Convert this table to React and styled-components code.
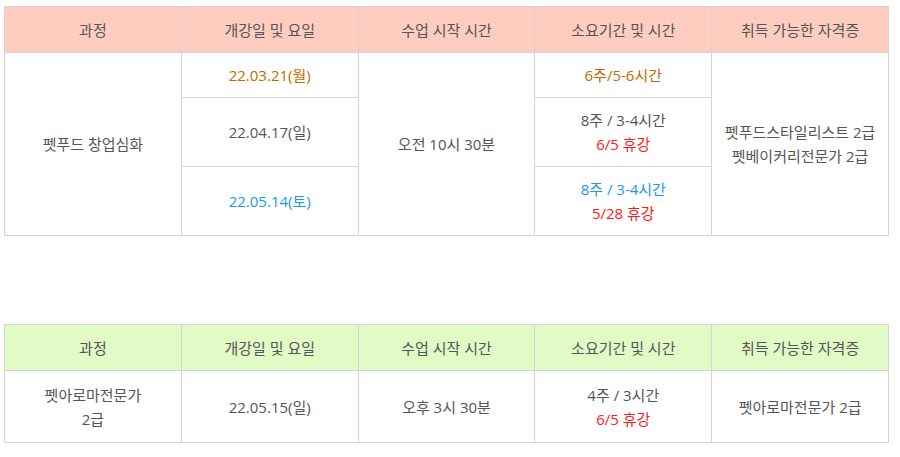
import React from "react";
import styled, { createGlobalStyle } from "styled-components";

const Global = createGlobalStyle`
  body {
    margin: 0;
    background: #fff;
    font-family: "Open Sans", "Noto Sans CJK KR", sans-serif;
  }
`;

const Page = styled.div`
  padding: 6px 11px 0 4px;
  display: flex;
  flex-direction: column;
  gap: 88px;
`;

const Table = styled.table`
  width: 885px;
  border-collapse: collapse;
  table-layout: fixed;
  font-size: 15px;
  color: #555;
`;

const Th = styled.th`
  height: 45px;
  background: ${(p) => p.$bg};
  border: 1px solid #d4d4d4;
  font-weight: 400;
  color: #555;
  text-align: center;
  padding: 0;
`;

const Td = styled.td`
  height: ${(p) => p.$h || "auto"};
  border: 1px solid #d4d4d4;
  text-align: center;
  vertical-align: middle;
  line-height: 24px;
  padding: 0;
  color: ${(p) => p.$color || "#555"};
`;

const Red = styled.span`
  color: #ff1a1a;
`;

const ORANGE = "#c46a00";
const BLUE = "#1a9ae6";

function Head({ bg }) {
  const cols = ["과정", "개강일 및 요일", "수업 시작 시간", "소요기간 및 시간", "취득 가능한 자격증"];
  return (
    <thead>
      <tr>
        {cols.map((c) => (
          <Th key={c} $bg={bg}>
            {c}
          </Th>
        ))}
      </tr>
    </thead>
  );
}

export default function App() {
  return (
    <>
      <Global />
      <Page>
        <Table>
          <Head bg="#ffcdbf" />
          <tbody>
            <tr>
              <Td rowSpan={3}>펫푸드 창업심화</Td>
              <Td $h="44px" $color={ORANGE}>22.03.21(월)</Td>
              <Td rowSpan={3}>오전 10시 30분</Td>
              <Td $color={ORANGE}>6주/5-6시간</Td>
              <Td rowSpan={3}>
                펫푸드스타일리스트 2급
                <br />
                펫베이커리전문가 2급
              </Td>
            </tr>
            <tr>
              <Td $h="68px">22.04.17(일)</Td>
              <Td>
                8주 / 3-4시간
                <br />
                <Red>6/5 휴강</Red>
              </Td>
            </tr>
            <tr>
              <Td $h="68px" $color={BLUE}>22.05.14(토)</Td>
              <Td $color={BLUE}>
                8주 / 3-4시간
                <br />
                <Red>5/28 휴강</Red>
              </Td>
            </tr>
          </tbody>
        </Table>

        <Table>
          <Head bg="#e1fbc6" />
          <tbody>
            <tr>
              <Td $h="71px">
                펫아로마전문가
                <br />
                2급
              </Td>
              <Td>22.05.15(일)</Td>
              <Td>오후 3시 30분</Td>
              <Td>
                4주 / 3시간
                <br />
                <Red>6/5 휴강</Red>
              </Td>
              <Td>펫아로마전문가 2급</Td>
            </tr>
          </tbody>
        </Table>
      </Page>
    </>
  );
}
